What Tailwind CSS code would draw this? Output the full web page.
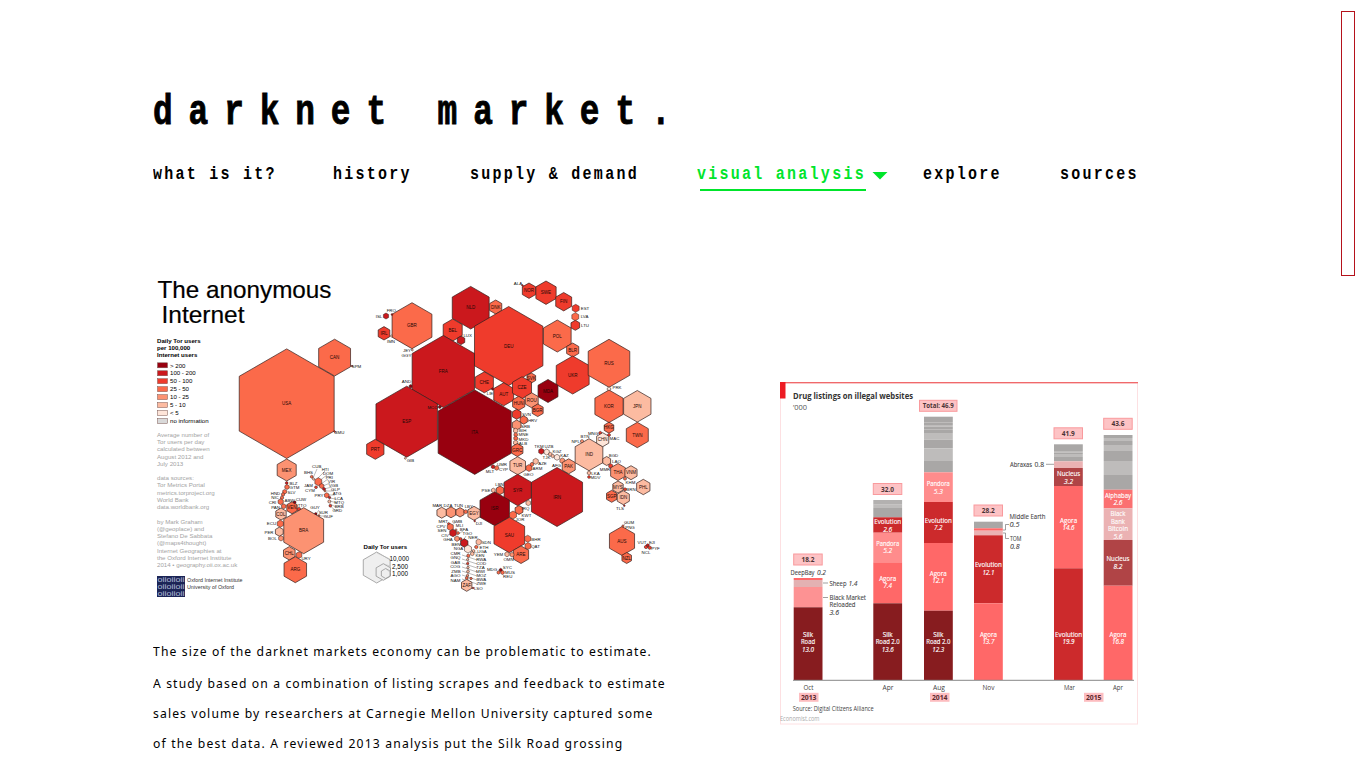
<!DOCTYPE html>
<html lang="en">
<head>
<meta charset="utf-8">
<title>darknet market.</title>
<script src="https://cdn.jsdelivr.net/npm/@tailwindcss/browser@4"></script>
</head>
<body class="bg-white text-black h-[768px] overflow-hidden relative">
<div class="absolute left-[1341px] top-[11px] w-[14px] h-[265px] border border-[#b5121b]"></div>
<div class="pl-[153px] flex flex-col">
  <header class="pt-[90px] h-[250px]">
    <h1 class="h-[46px] leading-[46px] text-[42px] font-bold font-['Liberation_Mono',monospace] tracking-[20.4px] origin-left scale-x-[.78] whitespace-nowrap w-[700px] [-webkit-text-stroke:.9px_black]">darknet market.</h1>
    <nav class="mt-[27px] flex h-[30px] font-bold text-[18.5px] leading-[24px] font-['Liberation_Mono',monospace] tracking-[2.8px] whitespace-nowrap">
      <a class="w-[180px] shrink-0"><span class="block origin-left scale-x-[.81]">what is it?</span></a>
      <a class="w-[137px] shrink-0"><span class="block origin-left scale-x-[.81]">history</span></a>
      <a class="w-[227px] shrink-0"><span class="block origin-left scale-x-[.81]">supply &amp; demand</span></a>
      <a class="w-[226px] shrink-0 text-[#00e52b] flex"><span class="block w-[175px] shrink-0"><span class="block origin-left scale-x-[.81] w-[216px]">visual analysis</span><span class="block h-[2px] w-[166px] ml-[3px] mt-[2px] bg-[#00e52b]"></span></span><svg class="w-[16px] h-[8px] mt-[9px] shrink-0" viewBox="0 0 16 8"><path fill="#00e52b" d="M.5 0h15L8 7.5z"/></svg></a>
      <a class="w-[137px] shrink-0"><span class="block origin-left scale-x-[.81]">explore</span></a>
      <a class="w-[100px] shrink-0"><span class="block origin-left scale-x-[.81]">sources</span></a>
    </nav>
  </header>
  <main class="flex">
    <section class="w-[627px] shrink-0 pt-[20px]">
      <svg id="tor" class="block w-[517px] h-[340px]" viewBox="153 270 517 340" font-family="Liberation Sans, Arial, sans-serif"></svg>
      <div class="pt-[26px] text-[13px] font-['Noto_Sans','Open_Sans',sans-serif] whitespace-nowrap leading-[30px] origin-left scale-x-[.935]">
        <p class="mb-[2px] tracking-[1.2px]">The size of the darknet markets economy can be problematic to estimate.</p>
        <p class="tracking-[1.2px]">A study based on a combination of listing scrapes and feedback to estimate</p>
        <p class="tracking-[1.2px]">sales volume by researchers at Carnegie Mellon University captured some</p>
        <p class="tracking-[1.25px]">of the best data. A reviewed 2013 analysis put the Silk Road grossing</p>
      </div>
    </section>
    <section class="pt-[131px]">
      <svg id="drugs" class="block w-[360px] h-[345px]" viewBox="780 381 360 345" font-family="Open Sans, Noto Sans, sans-serif"></svg>
    </section>
  </main>
</div>
<script>
const C={A:'#98000f',B:'#cb181d',C:'#ef3b2c',D:'#fb6a4a',E:'#fc9272',F:'#fcbba1',G:'#fee5d9',H:'#efefef'};
const txt=(x,y,s,z,o='')=>`<text x="${x}" y="${y}" font-size="${z}" ${o}>${s}</text>`;
const hex=(x,y,r,c)=>{const w=r*.866,h=r/2;return `<path d="M${x} ${y-r}L${x+w} ${y-h}V${y+h}L${x} ${y+r}L${x-w} ${y+h}V${y-h}Z" fill="${C[c]}" stroke="#33201c" stroke-width="${r>4?.7:.5}"/>`};
// x, y, radius, colour band, label drawn in the centre
const cells=`286.7 403.7 54.8 D USA|334.6 357.6 18.4 D CAN|286.7 470 11 E MEX|286.7 483 1.5 B|287 487 2.5 D|284.7 491.7 2.3 D|283 494.5 1.8 D|282 497.7 1.8 D|280.7 501.7 3 D|283.7 506.3 2.5 D|292 507.7 6 D VEN|294.7 502.3 1.5 A|299 509.3 2 C|281 514 6 F COL|280.3 523.7 3.6 D|279.3 531.7 4.5 F|281 538.3 2.7 E|315.7 514 1.5 A|319 515.5 1 D|303.7 530.7 23 E BRA|289.3 553.3 6.7 E CHL|299 555 3.3 D|295.3 569.7 13 D ARG|311.7 476.7 1.5 D|313.5 479 1.2 F|318.3 481.7 4 D|316 487.3 1.5 C|321.7 486 2.5 D|324 489 1.6 B|325 491 1 D|326.7 495.3 2.6 D|329.5 497.5 1.3 B|329.3 501.5 1.6 F|330.3 505.7 1.5 C|352 366 .8 A|334.5 431.5 .9 C
470.7 307.7 21.3 B NLD|495.7 307 7 D DNK|412 325.7 23 D GBR|386 316 3 B|392 314.5 1 B|384 333.3 6.7 C IRL|391.5 336 1 F|412.3 350 1 F|452.7 330 11 C BEL|461 340.3 4.3 B|508.7 346 39.5 C DEU|410.7 386.3 1.8 A|443.3 371.5 36 B FRA|406.7 421.7 35.5 B ESP|439.7 407 1.6 A|484.3 382.3 10.5 C CHE|492.7 389 1.3 A|503.7 394.3 11.5 C AUT|474.7 432.2 42.2 A ITA|375.3 449.3 10 C PRT|405.3 458.3 1 F|529 290.7 7.7 C NOR|522.5 285.5 .9 B|546 292.7 11.7 C SWE|563.7 301.7 9.2 C FIN|575.7 308.3 4 C|575.3 316.7 4 D|575.3 325.3 5 C|557.3 336 16 D POL|572.7 350 7 D BLR|572.7 375 19 C UKR|609 363.3 24 D RUS|609 389 2 G|609 406.3 16.3 D KOR|637.3 406.3 15.8 F JPN|609 427.7 5.5 D HKG|637.3 435 12.7 D TWN|548 391 11.5 A MDA|531.3 378 5 D SVK|522 387.7 11 C CZE|531.7 400.3 7.5 E ROU|518.7 403.3 7 D HUN|537.7 410.3 6.3 D BGR|516.7 414.3 5 C|523.7 420 4.2 D|516.7 425 5 E|515.7 430.7 2.5 F|515.7 434.7 2 D|515.7 438.3 2.2 D|515.7 442.7 2.5 F|517.3 450 6.5 D GRC
517.7 465.7 9 F TUR|529 468 3.5 D|532 464.3 2 D|535.7 461.3 3 F|557 497 29.5 B IRN|517.7 490 15.7 B SYR|541.3 451.3 3 B|546.7 452 3 G|550.3 454.3 2 F|552.7 456 1.8 F|557 457.3 3 G|562.3 460.7 2.8 E|568.7 466.3 7.5 E PAK|582 441.3 1.8 E|589 454.7 16 F IND|600.3 433 1.7 C|609 435 1.6 C|602.7 439.7 7 G CHN|606.7 461 4.5 F|610.7 466 2.3 C|618 472 8.5 E THA|631 472.7 7 F VNM|625 478.7 1.6 D|618 487 6 F MYS|625 489.3 1.6 C|643.3 487 7.7 F PHL|611.7 496.3 6 D SGP|623.3 497.7 7 F IDN|624.3 505.7 .9 B|589 473 2 F|589 477 1.5 C|622 541 14.5 D AUS|623 526 1.2 D|626.7 558 5.5 D NZL|646 547 1.8 C|649.7 547.7 1.8 C|647.7 545.3 1.6 B|494.7 508.7 17 A ISR|509.3 535 17.7 C SAU|500 490.3 4.3 D|493.3 490.3 2.2 F|519 510 4.5 D|528.3 503 2.7 F|513 515 4 D|527.7 538.7 3.5 D|528 546 3.5 D|521 554.7 8.8 D ARE|512 554.7 2.3 E|507 554.3 2.5 F|493 466.7 2 B|496.7 468 2.3 D
441.7 512.7 5.5 F|451 512.3 5.5 E|460 512.3 4.7 E|465.7 511.7 2 D|474 513.3 7 F EGY|474.7 521 .9 B|448.7 523.8 1.3 C|450.3 527 3.5 D|456 530 1.2 E|453 533 3.8 B|458 533 1.5 D|457 538.7 2.7 E|460.7 539 1.5 C|464.3 543 4.2 B|468 549 4 G|478.7 542 3 F|476.3 547 1.8 D|473.5 551 1.5 F|472.3 553.7 2 F|468.3 555.7 1.7 D|467.7 559.5 1.2 F|467.7 563.5 1.3 C|468 567.5 1.3 F|468 571.5 1.5 F|467.5 575.5 1.3 E|466.7 578 1.5 D|471 578.5 1.3 D|466.7 585.3 6 F ZAF|473 588 .9 B|500.7 570 1.7 A|498.5 572.5 1.7 D|502.5 572.5 2 D`.split(/[|\n]/);
const labels=`SPM 356.5 368 BMU 339.5 433.5 BLZ 293.5 484.5 GTM 294.5 489 SLV 291.5 493.5 HND 275.5 494.5 NIC 275 499 CRI 272.5 503.5 PAN 275.5 508.5 ABW 289.5 501.5 CUW 301 501 TTO 302 506.5 ECU 271.5 525 PER 269 533.5 BOL 272.5 540 URY 306 559.5 CUB 316.7 468 HTI 325.2 470.5 BHS 308.5 473.5 DOM 328 474.5 PRI 329.3 479 VIR 331.5 483 VGB 333.5 487.2 GLP 335.5 491.2 ATG 337 495.3 LCA 338.7 499.5 MTQ 339.2 503.7 BRB 339.2 507.7 GRD 337.3 512 JAM 308.5 487 CYM 310 492 PRY 319 497 GUY 315 509.3 SUR 323.3 513.5 GUF 328.3 517.5
FRO 391.3 312 ISL 379 317.5 IMN 391 343 JEY 407 352 GGY 406.5 356.5 LUX 467.7 336.5 AND 406.5 383 MCO 432.5 408.5 LIE 490 395 GIB 410.5 461.5 ALA 518 285 EST 585 310 LVA 584.5 318 LTU 585 327 PRK 617 389 SVN 526.5 415.5 HRV 532.5 421.5 SRB 525.5 428.3 BIH 522.7 432.3 MNE 523.5 436.4 MKD 523.5 440.5 ALB 523 444.6 MNG 593 434.5 MAC 614.5 440 BTN 585 438.3 NPL 575.7 443 TKM 539 447.7 UZB 549 447.7 TJK 546.5 458.5 KGZ 557 453 KAZ 564.5 457 AFG 556.5 466.5 AZE 542.5 465 ARM 537.5 469.5 GEO 528.5 476.3 BGD 613.5 457 LAO 616.5 463 MMR 605 471 KHM 630.5 484 BRN 631 490.5 TLS 620 510 LKA 595.5 475 MDV 595.5 479.3 GUM 629 524 PNG 630 528.5 VUT 642 544 FJI 652 544 PYF 655.5 550 NCL 646 554
LBN 499.5 486 PSE 486 492 MLT 490 473 UMR 502 466 CYP 503.5 470.5 IRQ 525.5 510 KWT 526.5 517.3 JOR 520 521.3 BHR 536 540.5 QAT 535.5 548 YEM 498.5 556 OMN 508.5 561 MAR 437.3 507 DZA 448 507 TUN 458.5 507 LBY 468.8 507.5 DJI 479 525.3 MRT 443.3 523 GMB 457.3 523 CPV 441 528 MLI 459.5 527 SEN 442 532.3 BFA 464 531.3 CIV 445 537 TGO 467.3 535 GHA 448 541.3 NER 473 538.7 BEN 456 545.5 SDN 486.3 543.8 NGA 458.5 550.3 ETH 484 548.7 CMR 455.5 554.8 UGA 482 553 GNQ 455.5 559.3 KEN 480 556.9 GAB 455.5 563.5 RWA 481.3 561 COG 455.2 568 COD 481.3 565 ZMB 456 572.5 TZA 480.5 568.9 AGO 455.5 577 MWI 480.5 572.8 NAM 455.5 581.5 MOZ 481.3 576.8 BWA 481.3 580.8 ZWE 481.3 584.8 LSO 478.3 590.3 MDG 492 571.3 SYC 507.3 569.3 MUS 510 573.8 REU 507.7 578`.split(/\s+/);
let t='';
t+=txt(157.5,298,'The anonymous',24,'textLength="174" lengthAdjust="spacingAndGlyphs" stroke="#000" stroke-width=".2"')+txt(161.5,322.5,'Internet',24,'textLength="83" lengthAdjust="spacingAndGlyphs" stroke="#000" stroke-width=".2"');
['Daily Tor users','per 100,000','Internet users'].forEach((s,i)=>t+=txt(157,342.8+i*7.3,s,6.1,'font-weight="bold"'));
[['A','&gt; 200'],['B','100 - 200'],['C','50 - 100'],['D','25 - 50'],['E','10 - 25'],['F','5 - 10'],['G','&lt; 5'],['N','no information']].forEach(([c,s],i)=>{const y=362.8+i*7.95;t+=`<rect x="157.5" y="${y}" width="10" height="5" fill="${C[c]||'#d9d9d9'}" stroke="#7a5650" stroke-width=".5"/>`+txt(170,y+4.7,s,6.1)});
['Average number of','Tor users per day','calculated between','August 2012 and','July 2013','','data sources:','Tor Metrics Portal','metrics.torproject.org','World Bank','data.worldbank.org','','by Mark Graham','(@geoplace) and','Stefano De Sabbata','(@maps4thought)','Internet Geographies at','the Oxford Internet Institute','2014 • geography.oii.ox.ac.uk'].forEach((s,i)=>t+=txt(157,436.8+i*7.24,s,6.15,'fill="#a3a3a3"'));
t+='<rect x="157" y="576" width="28" height="21" fill="#1c2556"/>';
for(let i=0;i<3;i++)t+=txt(157.6,582.2+i*7,'oiioiioii',6.8,'fill="#b4bcd8" textLength="26.8" lengthAdjust="spacingAndGlyphs"');
t+=txt(187,582,'Oxford Internet Institute',5.2,'fill="#333" textLength="55.5" lengthAdjust="spacingAndGlyphs"')+txt(187,589.2,'University of Oxford',5.2,'fill="#333" textLength="47" lengthAdjust="spacingAndGlyphs"');
t+='<path d="M313 478L317 469M317 479L325 471M319 481L327 475M321 484L328 479M323 486L330 483M324 489L332 487M326 491L334 491M328 495L335 495M329 498L336 499M330 501L337 503M330 504L336 507M330 506L335 510M316 514L319 510M319 516L326 516M462 555L477 560M462 559L477 564M462 563L477 568M462 567L477 572M462 571L477 576M462 575L477 580M462 579L477 584M470 552L478 553M463 541L466 536M457 535L463 531M452 525L456 522M468 556V580M623 526L626 523M648 545L652 543" stroke="#777" stroke-width=".5"/>';
cells.forEach(c=>{const [x,y,r,k,n]=c.split(' ');t+=hex(+x,+y,+r,k)});
cells.forEach(c=>{const [x,y,r,k,n]=c.split(' ');if(n)t+=txt(x,+y+1.6,n,4.5,'fill="#1c0805" text-anchor="middle"')});
for(let i=0;i<labels.length;i+=3)t+=txt(labels[i+1],labels[i+2],labels[i],4.4,'fill="#111" text-anchor="middle"');
t+=txt(363.5,548.8,'Daily Tor users',6.1,'font-weight="bold"')+hex(376.7,567.5,15.5,'H').replace('#33201c','#888')+hex(383.3,572,8.3,'H').replace('#33201c','#888')+hex(385.7,573.5,5,'H').replace('#33201c','#888');
t+='<path d="M377 553L390 559M384 564L390 566M386 569L391 573" stroke="#bbb" stroke-width=".5"/>'+txt(409,561,'10,000',6.4,'text-anchor="end"')+txt(408,568.5,'2,500',6.4,'text-anchor="end"')+txt(408,575.5,'1,000',6.4,'text-anchor="end"');
document.getElementById('tor').innerHTML=t;

let d='<rect x="780.5" y="383" width="357" height="341" fill="#fff" stroke="#fde0e2"/><rect x="780" y="382" width="358" height="1.3" fill="#f0696b"/><rect x="780" y="382" width="5.5" height="16.5" fill="#ed1c24"/>';
const T=(x,y,s,w,o='',z=7)=>txt(x,y,s,z,`textLength="${w}" lengthAdjust="spacingAndGlyphs" ${o}`);
d+=T(793,398.5,'Drug listings on illegal websites',120,'font-weight="bold" fill="#333"',9)+T(793,410,'’000',14,'fill="#555"',7.5);
const S='#871c1f',G='#ff6868',E='#cc2a2c',P='#ff8c8c',N='#b04446',K='#ebb2b3',a='#a9a7a6',b='#bebcbb';
// each bar: left edge, then alternating top edge and fill, from the top down to the axis
[[793.7,578,G,580,'#e3b1b2',587,'#fd9293',607.3,S],
[873.3,500,'#b3b1b0',504,a,504.6,b,508,a,517.3,E,532.7,P,562.3,G,603.3,S],
[924,416.7,a,422,b,423,a,425,b,426.5,a,429,b,430,a,433,b,439.7,a,448.3,b,461,a,472.3,P,502,E,543,G,610.7,S],
[974,521.7,a,528.3,G,530.7,K,535.3,E,603.3,G],
[1054,444.3,a,451,b,452.5,a,454,b,457,a,461.3,K,468,N,486,G,568.3,E],
[1103.7,435,a,438,b,441,a,445,b,451,a,461,b,475,a,489.7,'#fb7071',508.3,K,540,N,585.7,G]].forEach(r=>{for(let i=1;i<r.length;i+=2){const e=r[i+2]||680;d+=`<rect x="${r[0]}" y="${r[i]}" width="28.8" height="${e-r[i]}" fill="${r[i+1]}"/>`}});
d+='<path d="M793 680.3H1134" stroke="#888" stroke-width="1"/>';
[[793.7,554,28.5,'18.2'],[873.3,483.5,28.5,'32.0'],[919.5,400.3,37.5,'Total: 46.9'],[974,505,28.5,'28.2'],[1054,427.8,28.5,'41.9'],[1103.7,418.3,28.5,'43.6']].forEach(([x,y,w,s])=>d+=`<rect x="${x}" y="${y}" width="${w}" height="11" fill="#fdc3c5" stroke="#f99a9d"/>`+T(x+w/2,y+8,s,s.length>4?31:13,'text-anchor="middle" font-weight="bold" fill="#4a3335"',7));
[[799,692.8,'2013'],[930,692.8,'2014'],[1084,692.8,'2015']].forEach(([x,y,s])=>d+=`<rect x="${x}" y="${y}" width="19.5" height="9" fill="#fdbdc0"/>`+T(x+9.75,y+7.2,s,15.5,'text-anchor="middle" font-weight="bold" fill="#5a2a2e"',7));
[[808.5,'Oct',10],[888,'Apr',11],[939,'Aug',12],[988.5,'Nov',12],[1069.5,'Mar',11],[1118,'Apr',10]].forEach(([x,s,w])=>d+=T(x,689.8,s,w,'text-anchor="middle" fill="#444"'));
const lab=(x,y,s,w)=>d+=T(x,y,s,w,`text-anchor="middle" fill="#fff" stroke="#fff" stroke-width=".15" ${/^\d/.test(s)?'font-style="italic"':''}`,7);
[[808,636.5,'Silk',10],[808,644,'Road',14],[808,651.5,'13.0',12],[887.7,636.5,'Silk',10],[887.7,644,'Road 2.0',24],[887.7,651.5,'13.6',12],[938.3,636.5,'Silk',10],[938.3,644,'Road 2.0',24],[938.3,651.5,'12.3',12],
[887.7,581,'Agora',17],[887.7,588.3,'7.4',8.5],[887.7,546,'Pandora',23],[887.7,553.3,'5.2',9],[887.7,524.3,'Evolution',27],[887.7,531.5,'2.6',9],
[938.3,575.5,'Agora',17],[938.3,583,'12.1',12],[938.3,523,'Evolution',27],[938.3,530.3,'7.2',8.5],[938.3,486,'Pandora',23],[938.3,493.5,'5.3',9],
[988.4,567.3,'Evolution',27],[988.4,574.5,'12.1',12],[988.4,637,'Agora',17],[988.4,644.3,'13.7',12],
[1068.6,476.3,'Nucleus',23],[1068.6,483.7,'3.2',9],[1068.6,522.5,'Agora',17],[1068.6,530,'14.6',12],[1068.6,636.5,'Evolution',27],[1068.6,644,'19.9',12],
[1118,497.7,'Alphabay',26],[1118,505,'2.6',9],[1118,516,'Black',15],[1118,523.5,'Bank',14],[1118,531,'Bitcoin',20],[1118,538.5,'5.6',9],[1118,561.3,'Nucleus',23],[1118,568.7,'8.2',9],[1118,636.5,'Agora',17],[1118,644,'16.8',12]].forEach(v=>lab(...v));
const I='fill="#444" font-style="italic" stroke="#444" stroke-width=".1"',R='fill="#444" stroke="#444" stroke-width=".1"';
d+=T(790.5,574.5,'DeepBay',24,R)+T(817,574.5,'0.2',9,I)+T(829.5,585.5,'Sheep',17,R)+T(848.5,585.5,'1.4',9,I)+T(829.5,599.7,'Black Market',36.5,R)+T(829.5,607.3,'Reloaded',26,R)+T(829.5,614.8,'3.6',9.5,I)
+T(1010,467,'Abraxas',22,R)+T(1034.5,467,'0.8',9.5,R)+T(1009.5,519,'Middle Earth',36,R)+T(1009.5,526.5,'0.5',10,I)+T(1010,541,'TOM',11.5,R)+T(1010,548.5,'0.8',9.5,I)
+T(792.7,711.3,'Source: Digital Citizens Alliance',81,'fill="#444"',6.5)+T(780,721.3,'Economist.com',39.5,'fill="#aaa"',6.5)
+'<path d="M823 583H828M823 597.5H828M1046 464.3H1054M1003 530H1005.5V524.5H1009M1003 533H1005.5V538.5H1009" fill="none" stroke="#777" stroke-width=".7"/>';
document.getElementById('drugs').innerHTML=d;
</script>
</body>
</html>
